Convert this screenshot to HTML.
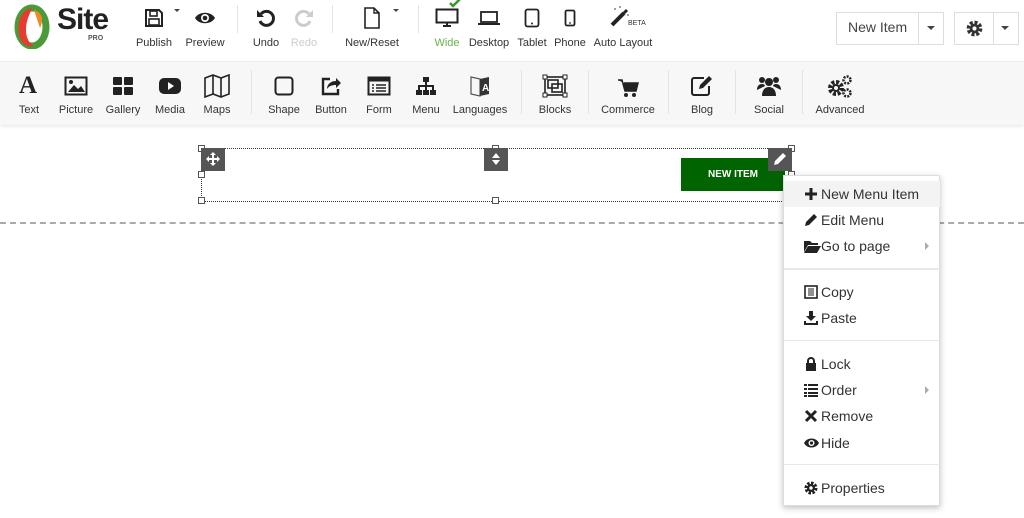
<!DOCTYPE html>
<html><head><meta charset="utf-8"><style>
*{margin:0;padding:0;box-sizing:border-box}
body{width:1024px;height:518px;overflow:hidden;background:#fff;font-family:"Liberation Sans",sans-serif;position:relative;color:#333}
.a{position:absolute}
.lbl{position:absolute;font-size:11px;color:#333;transform:translateX(-50%);white-space:nowrap}
.ic{position:absolute;transform:translate(-50%,-50%)}
.sep{position:absolute;width:1px;background:#e3e3e3}
.mi{position:absolute;left:0;width:156px;height:26px;font-size:14px;color:#333;line-height:26px;padding-left:37px}
.mi svg{position:absolute;left:20px;top:6px}
.dv{position:absolute;left:0;width:156px;height:2px;background:#e8e8e8}
.h{position:absolute;width:7px;height:7px;border:1px solid #555;background:#fff}
</style></head><body>
<div class="a" style="left:0;top:0;width:1024px;height:61px;background:#fff"></div>
<div class="a" style="left:0;top:61px;width:1024px;height:64px;background:#f7f7f7;border-top:1px solid #ececec;box-shadow:0 2px 3px rgba(0,0,0,.08)"></div>
<svg class="a" style="left:12px;top:4px" width="40" height="45" viewBox="0 0 40 45">
<ellipse cx="20" cy="23" rx="14" ry="19" fill="none" stroke="#4a9a3a" stroke-width="7"/>
<path d="M20 4 C8 6 4 20 8 34 C10 40 16 44 22 42 C14 38 12 26 16 14 Z" fill="#e63b2e"/>
<path d="M22 6 C30 8 32 16 28 24 C26 18 24 12 22 6Z" fill="#f08a25"/>
</svg>
<div class="a" style="left:57px;top:3px;font-size:30px;font-weight:bold;color:#222;letter-spacing:-1px">Site</div>
<div class="a" style="left:88px;top:35px;font-size:7px;font-weight:bold;color:#555">PRO</div>
<svg class="ic" style="left:154px;top:18px" width="20" height="20" viewBox="0 0 20 20"><path d="M2 2h13l3 3v13H2z" fill="none" stroke="#222" stroke-width="2"/><rect x="6" y="3" width="7" height="5" fill="none" stroke="#222" stroke-width="1.6"/><rect x="5" y="11" width="10" height="6" fill="none" stroke="#222" stroke-width="1.6"/></svg>
<div class="a" style="left:174px;top:9px;border:3px solid transparent;border-top-color:#444"></div>
<svg class="ic" style="left:205px;top:18px" width="22" height="16" viewBox="0 0 22 16"><path d="M1 8C5 1 17 1 21 8C17 15 5 15 1 8Z" fill="#222"/><circle cx="11" cy="8" r="4" fill="#fff"/><circle cx="11" cy="8" r="2.3" fill="#222"/></svg>
<svg class="ic" style="left:266px;top:18px" width="20" height="20" viewBox="0 0 20 20"><path d="M5 6A7 7 0 1 1 4 13" fill="none" stroke="#222" stroke-width="3"/><path d="M1 2v7h7z" fill="#222"/></svg>
<svg class="ic" style="left:304px;top:18px" width="20" height="20" viewBox="0 0 20 20"><path d="M15 6A7 7 0 1 0 16 13" fill="none" stroke="#ccc" stroke-width="3"/><path d="M19 2v7h-7z" fill="#ccc"/></svg>
<svg class="ic" style="left:372px;top:18px" width="18" height="22" viewBox="0 0 18 22"><path d="M2 1h9l5 5v15H2z" fill="none" stroke="#222" stroke-width="1.6"/><path d="M11 1v5h5" fill="none" stroke="#222" stroke-width="1.4"/></svg>
<div class="a" style="left:393px;top:9px;border:3px solid transparent;border-top-color:#444"></div>
<svg class="ic" style="left:447px;top:18px" width="24" height="20" viewBox="0 0 24 20"><rect x="1.5" y="1.5" width="21" height="13" fill="none" stroke="#222" stroke-width="2"/><path d="M8 18h8M12 15v3" stroke="#222" stroke-width="2"/></svg>
<svg class="a" style="left:448px;top:-2px" width="14" height="10" viewBox="0 0 14 10"><path d="M2 5l3 3 7-7" fill="none" stroke="#3a9a2a" stroke-width="2.5"/></svg>
<svg class="ic" style="left:489px;top:18px" width="24" height="16" viewBox="0 0 24 16"><rect x="4" y="2" width="16" height="10" fill="none" stroke="#222" stroke-width="1.8"/><path d="M1 14h22" stroke="#222" stroke-width="2"/></svg>
<svg class="ic" style="left:532px;top:18px" width="16" height="20" viewBox="0 0 16 20"><rect x="1.5" y="1.5" width="13" height="17" rx="2" fill="none" stroke="#222" stroke-width="1.8"/><circle cx="8" cy="15.5" r="1" fill="#222"/></svg>
<svg class="ic" style="left:570px;top:18px" width="12" height="18" viewBox="0 0 12 18"><rect x="1.5" y="1.5" width="9" height="15" rx="1.5" fill="none" stroke="#222" stroke-width="1.8"/><circle cx="6" cy="14" r="0.9" fill="#222"/></svg>
<svg class="ic" style="left:620px;top:16px" width="22" height="22" viewBox="0 0 22 22"><path d="M3 20L15 8" stroke="#222" stroke-width="4"/><path d="M15 8l3-3" stroke="#222" stroke-width="3"/><circle cx="6" cy="4" r=".8" fill="#333"/><circle cx="11" cy="2" r=".8" fill="#333"/><circle cx="19" cy="10" r=".8" fill="#333"/></svg>
<div class="a" style="left:628px;top:20px;font-size:7px;color:#333">BETA</div>
<div class="sep" style="left:237px;top:5px;height:28px"></div>
<div class="sep" style="left:332px;top:5px;height:28px"></div>
<div class="sep" style="left:418px;top:5px;height:28px"></div>
<div class="lbl" style="left:154px;top:37px">Publish</div>
<div class="lbl" style="left:205px;top:37px">Preview</div>
<div class="lbl" style="left:266px;top:37px">Undo</div>
<div class="lbl" style="left:304px;top:37px;color:#ccc">Redo</div>
<div class="lbl" style="left:372px;top:37px">New/Reset</div>
<div class="lbl" style="left:447px;top:37px;color:#6ab04c">Wide</div>
<div class="lbl" style="left:489px;top:37px">Desktop</div>
<div class="lbl" style="left:532px;top:37px">Tablet</div>
<div class="lbl" style="left:570px;top:37px">Phone</div>
<div class="lbl" style="left:623px;top:37px">Auto Layout</div>
<div class="a" style="left:836px;top:12px;width:108px;height:33px;border:1px solid #ddd;background:#fff"></div>
<div class="a" style="left:918px;top:12px;width:1px;height:33px;background:#ddd"></div>
<div class="a" style="left:848px;top:19px;font-size:14px;color:#444">New Item</div>
<div class="a" style="left:927px;top:26px;border:4px solid transparent;border-top-color:#444"></div>
<div class="a" style="left:954px;top:12px;width:65px;height:33px;border:1px solid #ddd;background:#fff"></div>
<div class="a" style="left:993px;top:12px;width:1px;height:33px;background:#ddd"></div>
<svg class="a" style="left:966px;top:20px" width="17" height="17" viewBox="0 0 14 14"><circle cx="7" cy="7" r="5" fill="none" stroke="#333" stroke-width="3" stroke-dasharray="2.5 1.4"/><circle cx="7" cy="7" r="4" fill="#333"/><circle cx="7" cy="7" r="1.7" fill="#fff"/></svg>
<div class="a" style="left:1001px;top:26px;border:4px solid transparent;border-top-color:#444"></div>
<div class="a" style="left:19px;top:72px;font-family:'Liberation Serif',serif;font-size:25px;font-weight:bold;color:#222">A</div>
<svg class="ic" style="left:76px;top:86px" width="24" height="20" viewBox="0 0 24 20"><rect x="1.5" y="1.5" width="21" height="17" fill="none" stroke="#222" stroke-width="2"/><path d="M4 16l6-7 4 4 3-3 4 6z" fill="#222"/><circle cx="7" cy="6" r="2" fill="#222"/></svg>
<svg class="ic" style="left:123px;top:86px" width="22" height="20" viewBox="0 0 22 20"><rect x="1" y="1" width="9" height="8" rx="1" fill="#222"/><rect x="12" y="1" width="9" height="8" rx="1" fill="#222"/><rect x="1" y="11" width="9" height="8" rx="1" fill="#222"/><rect x="12" y="11" width="9" height="8" rx="1" fill="#222"/></svg>
<svg class="ic" style="left:170px;top:86px" width="24" height="18" viewBox="0 0 24 18"><rect x="1" y="1" width="22" height="16" rx="5" fill="#222"/><path d="M10 5v8l6-4z" fill="#fff"/></svg>
<svg class="ic" style="left:217px;top:86px" width="26" height="24" viewBox="0 0 26 24"><path d="M1 4l8-3 8 3 8-3v19l-8 3-8-3-8 3z" fill="none" stroke="#222" stroke-width="1.6"/><path d="M9 1v19M17 4v19" stroke="#222" stroke-width="1.6"/></svg>
<svg class="ic" style="left:284px;top:86px" width="20" height="20" viewBox="0 0 20 20"><rect x="1.5" y="1.5" width="17" height="17" rx="3" fill="none" stroke="#222" stroke-width="2"/></svg>
<svg class="ic" style="left:331px;top:86px" width="22" height="20" viewBox="0 0 22 20"><path d="M10 3H3v15h15v-5" fill="none" stroke="#222" stroke-width="2.4"/><path d="M7 13c0-5 4-8 9-8V2l5 5-5 5V9c-4 0-7 1-9 4z" fill="#222"/></svg>
<svg class="ic" style="left:379px;top:86px" width="24" height="20" viewBox="0 0 24 20"><rect x="1.5" y="1.5" width="21" height="17" fill="none" stroke="#222" stroke-width="2"/><rect x="1.5" y="1.5" width="21" height="4" fill="#222"/><path d="M5 9h2M9 9h10M5 12h2M9 12h10M5 15h2M9 15h10" stroke="#222" stroke-width="1.6"/></svg>
<svg class="ic" style="left:426px;top:86px" width="22" height="20" viewBox="0 0 22 20"><rect x="8" y="1" width="6" height="5" fill="#222"/><rect x="1" y="14" width="6" height="5" fill="#222"/><rect x="8" y="14" width="6" height="5" fill="#222"/><rect x="15" y="14" width="6" height="5" fill="#222"/><path d="M11 6v8M4 14v-4h14v4" fill="none" stroke="#222" stroke-width="2"/></svg>
<svg class="ic" style="left:480px;top:86px" width="22" height="24" viewBox="0 0 22 24"><path d="M2 3l9 2v17l-9-2z" fill="none" stroke="#555" stroke-width="1.2"/><path d="M11 5l9-2v17l-9 2z" fill="#333"/><text x="13" y="17" font-size="10" fill="#fff" font-family="Liberation Sans" font-weight="bold">A</text></svg>
<svg class="ic" style="left:555px;top:86px" width="26" height="24" viewBox="0 0 26 24"><rect x="3" y="3" width="20" height="18" fill="none" stroke="#222" stroke-width="1.6"/><rect x="6" y="6" width="10" height="8" fill="none" stroke="#222" stroke-width="1.6"/><rect x="10" y="10" width="10" height="8" fill="none" stroke="#222" stroke-width="1.6"/><g fill="#fff" stroke="#222"><rect x="1" y="1" width="4" height="4"/><rect x="21" y="1" width="4" height="4"/><rect x="1" y="19" width="4" height="4"/><rect x="21" y="19" width="4" height="4"/></g></svg>
<svg class="ic" style="left:628px;top:88px" width="22" height="20" viewBox="0 0 22 20"><path d="M1 2h4l3 11h11l2-8H7" fill="#222" stroke="#222" stroke-width="1.5"/><circle cx="9" cy="17" r="2" fill="#222"/><circle cx="17" cy="17" r="2" fill="#222"/></svg>
<svg class="ic" style="left:702px;top:86px" width="24" height="22" viewBox="0 0 24 22"><path d="M14 3H4a2 2 0 0 0-2 2v13a2 2 0 0 0 2 2h13a2 2 0 0 0 2-2v-7" fill="none" stroke="#222" stroke-width="2"/><path d="M9 14l1-4 9-9 3 3-9 9z" fill="#222"/></svg>
<svg class="ic" style="left:769px;top:86px" width="26" height="22" viewBox="0 0 26 22"><circle cx="6" cy="5" r="3" fill="#222"/><circle cx="20" cy="5" r="3" fill="#222"/><circle cx="13" cy="7" r="4" fill="#222"/><path d="M1 15c0-4 2-6 5-6s3 2 3 2M25 15c0-4-2-6-5-6s-3 2-3 2" fill="#222"/><path d="M6 21c0-6 3-9 7-9s7 3 7 9z" fill="#222"/></svg>
<svg class="ic" style="left:840px;top:86px" width="26" height="24" viewBox="0 0 26 24"><circle cx="9" cy="14" r="6" fill="none" stroke="#222" stroke-width="4" stroke-dasharray="3 1.7"/><circle cx="9" cy="14" r="4" fill="#222"/><circle cx="9" cy="14" r="2" fill="#f7f7f7"/><circle cx="20" cy="6" r="3.5" fill="none" stroke="#222" stroke-width="2.5" stroke-dasharray="2 1.2"/><circle cx="20" cy="19" r="3.5" fill="none" stroke="#222" stroke-width="2.5" stroke-dasharray="2 1.2"/></svg>
<div class="sep" style="left:251px;top:70px;height:44px"></div>
<div class="sep" style="left:521px;top:70px;height:44px"></div>
<div class="sep" style="left:588px;top:70px;height:44px"></div>
<div class="sep" style="left:668px;top:70px;height:44px"></div>
<div class="sep" style="left:735px;top:70px;height:44px"></div>
<div class="sep" style="left:802px;top:70px;height:44px"></div>
<div class="lbl" style="left:29px;top:104px">Text</div>
<div class="lbl" style="left:76px;top:104px">Picture</div>
<div class="lbl" style="left:123px;top:104px">Gallery</div>
<div class="lbl" style="left:170px;top:104px">Media</div>
<div class="lbl" style="left:217px;top:104px">Maps</div>
<div class="lbl" style="left:284px;top:104px">Shape</div>
<div class="lbl" style="left:331px;top:104px">Button</div>
<div class="lbl" style="left:379px;top:104px">Form</div>
<div class="lbl" style="left:426px;top:104px">Menu</div>
<div class="lbl" style="left:480px;top:104px">Languages</div>
<div class="lbl" style="left:555px;top:104px">Blocks</div>
<div class="lbl" style="left:628px;top:104px">Commerce</div>
<div class="lbl" style="left:702px;top:104px">Blog</div>
<div class="lbl" style="left:769px;top:104px">Social</div>
<div class="lbl" style="left:840px;top:104px">Advanced</div>
<div class="a" style="left:0;top:222px;width:1024px;border-top:2px dashed #aaa"></div>
<div class="a" style="left:201px;top:148px;width:591px;height:54px;border:1px dotted #333"></div>
<div class="a" style="left:681px;top:158px;width:104px;height:33px;background:#006400;color:#fff;font-size:10px;font-weight:bold;text-align:center;line-height:33px">NEW ITEM</div>
<div class="h" style="left:198px;top:145px"></div><div class="h" style="left:492px;top:145px"></div><div class="h" style="left:788px;top:145px"></div>
<div class="h" style="left:198px;top:171px"></div><div class="h" style="left:788px;top:171px"></div>
<div class="h" style="left:198px;top:197px"></div><div class="h" style="left:492px;top:197px"></div>
<div class="a" style="left:201px;top:148px;width:24px;height:23px;background:#555"></div>
<svg class="a" style="left:205px;top:151px" width="16" height="16" viewBox="0 0 16 16"><path d="M8 1l3 3H9v3h3V5l3 3-3 3V9H9v3h2l-3 3-3-3h2V9H4v2L1 8l3-3v2h3V4H5z" fill="#fff"/></svg>
<div class="a" style="left:484px;top:148px;width:24px;height:23px;background:#555"></div>
<svg class="a" style="left:490px;top:151px" width="12" height="16" viewBox="0 0 12 16"><path d="M6 2l4 5H2zM6 14l4-5H2z" fill="#fff"/></svg>
<div class="a" style="left:768px;top:148px;width:24px;height:23px;background:#555"></div>
<svg class="a" style="left:772px;top:151px" width="16" height="16" viewBox="0 0 16 16"><path d="M2 14l1-4 8-8 3 3-8 8z" fill="#fff"/></svg>
<div class="a" style="left:783px;top:175px;width:157px;height:331px;background:#fff;border:1px solid #ddd;box-shadow:0 2px 6px rgba(0,0,0,.25)">
<div class="mi" style="top:5px;background:#f3f3f3"><svg width="14" height="14" viewBox="0 0 14 14"><path d="M5.5 1h3v4.5H13v3H8.5V13h-3V8.5H1v-3h4.5z" fill="#222"/></svg>New Menu Item</div>
<div class="mi" style="top:31px"><svg width="14" height="14" viewBox="0 0 14 14"><path d="M1 13l1-4 8-8 3 3-8 8z" fill="#222"/></svg>Edit Menu</div>
<div class="mi" style="top:57px"><svg width="17" height="14" viewBox="0 0 17 14"><path d="M0 2h6l2 2h6v2H4L0 13z" fill="#222"/><path d="M4 7h13l-4 7H0z" fill="#222"/></svg>Go to page</div>
<div class="a" style="left:141px;top:66px;border:4px solid transparent;border-left-color:#aaa;border-right:0"></div>
<div class="dv" style="top:92px"></div>
<div class="mi" style="top:103px"><svg width="14" height="14" viewBox="0 0 14 14"><rect x="1" y="1" width="12" height="12" fill="none" stroke="#222" stroke-width="1.6"/><path d="M4 4h6M4 6h6M4 8h6M4 10h6" stroke="#222"/></svg>Copy</div>
<div class="mi" style="top:129px"><svg width="14" height="14" viewBox="0 0 14 14"><path d="M5 0h4v5h3L7 10 2 5h3z" fill="#222"/><path d="M1 10v3h12v-3" fill="none" stroke="#222" stroke-width="2"/></svg>Paste</div>
<div class="dv" style="top:164px;height:1px"></div>
<div class="mi" style="top:175px"><svg width="14" height="14" viewBox="0 0 14 14"><path d="M4 6V4a3 3 0 0 1 6 0v2" fill="none" stroke="#222" stroke-width="2"/><rect x="2" y="6" width="10" height="8" fill="#222"/></svg>Lock</div>
<div class="mi" style="top:201px"><svg width="14" height="14" viewBox="0 0 14 14"><path d="M0 1h3v2H0zM0 5h3v2H0zM0 9h3v2H0zM4 1h10v2H4zM4 5h10v2H4zM4 9h10v2H4zM0 12h3v2H0zM4 12h10v2H4z" fill="#222"/></svg>Order</div>
<div class="a" style="left:141px;top:210px;border:4px solid transparent;border-left-color:#aaa;border-right:0"></div>
<div class="mi" style="top:227px"><svg width="14" height="14" viewBox="0 0 14 14"><path d="M2 2l10 10M12 2L2 12" stroke="#222" stroke-width="3"/></svg>Remove</div>
<div class="mi" style="top:254px"><svg width="15" height="14" viewBox="0 0 15 14"><path d="M0 7C3 1 12 1 15 7 12 13 3 13 0 7z" fill="#222"/><circle cx="7.5" cy="7" r="3" fill="#fff"/><circle cx="7.5" cy="7" r="1.6" fill="#222"/></svg>Hide</div>
<div class="dv" style="top:288px;height:1px"></div>
<div class="mi" style="top:299px"><svg width="14" height="14" viewBox="0 0 14 14"><circle cx="7" cy="7" r="5" fill="none" stroke="#222" stroke-width="3" stroke-dasharray="2.5 1.4"/><circle cx="7" cy="7" r="4" fill="#222"/><circle cx="7" cy="7" r="1.7" fill="#fff"/></svg>Properties</div>
</div>
</body></html>
